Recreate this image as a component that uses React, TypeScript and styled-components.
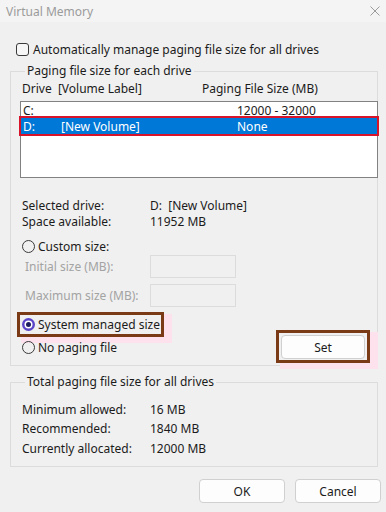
import React from "react";
import styled, { createGlobalStyle } from "styled-components";

const Global = createGlobalStyle`
  html, body { margin: 0; padding: 0; background: #f0f0f0; }
  * { box-sizing: border-box; }
`;

const Window = styled.div`
  width: 386px;
  height: 512px;
  background: #f0f0f0;
  font-family: "Noto Sans", "Open Sans", sans-serif;
  font-size: 12px;
  color: #1b1b1b;
  display: flex;
  flex-direction: column;
  overflow: hidden;
`;

const TitleBar = styled.div`
  height: 22px;
  background: #f4f4f4;
  display: flex;
  align-items: center;
  justify-content: space-between;
  padding: 0 6px 0 6px;
  color: #9b9b9b;
  font-size: 12px;
  flex-shrink: 0;
`;

const Close = styled.svg`
  width: 10px;
  height: 10px;
`;

const Body = styled.div`
  padding: 0 8px 0 10px;
  display: flex;
  flex-direction: column;
`;

const CheckRow = styled.label`
  display: flex;
  align-items: center;
  gap: 4px;
  margin: 20px 0 0 6px;
  height: 14px;
`;

const CheckBox = styled.span`
  width: 13px;
  height: 13px;
  border: 1px solid #3a3a3a;
  border-radius: 3px;
  background: #f7f7f7;
`;

const Group = styled.fieldset<{ $h: number; $top: number }>`
  margin: ${(p) => p.$top}px 0 0 0;
  padding: 0 0 0 9px;
  width: 368px;
  height: ${(p) => p.$h}px;
  border: 1px solid #dcdcdc;
  min-inline-size: 0;
`;

const Legend = styled.legend`
  padding: 0 2px;
  margin-left: 5px;
  line-height: 14px;
`;

const HeaderRow = styled.div`
  display: flex;
  height: 16px;
  align-items: center;
  margin-top: 2px;
  padding-left: 2px;
`;

const HeaderCell = styled.span<{ $w: number }>`
  width: ${(p) => p.$w}px;
`;

const List = styled.div`
  margin-top: 5px;
  width: 358px;
  height: 77px;
  background: #ffffff;
  border: 1px solid #828282;
  display: flex;
  flex-direction: column;
`;

const ListRow = styled.div<{ $sel?: boolean }>`
  display: flex;
  height: 16px;
  align-items: center;
  padding-left: 2px;
  background: ${(p) => (p.$sel ? "#0078d7" : "transparent")};
  color: ${(p) => (p.$sel ? "#ffffff" : "#1b1b1b")};
  outline: ${(p) => (p.$sel ? "2px solid #d8142b" : "none")};
`;

const Cell = styled.span<{ $w?: number }>`
  width: ${(p) => (p.$w ? `${p.$w}px` : "auto")};
  flex-shrink: 0;
`;

const InfoGrid = styled.div<{ $top: number; $row: number }>`
  display: grid;
  grid-template-columns: 128px auto;
  grid-auto-rows: ${(p) => p.$row}px;
  align-items: center;
  margin-top: ${(p) => p.$top}px;
  padding-left: 2px;
  line-height: 16px;
`;

const RadioRow = styled.div<{ $top: number }>`
  display: flex;
  align-items: center;
  gap: 3px;
  height: 16px;
  margin-top: ${(p) => p.$top}px;
  padding-left: 2px;
`;

const Radio = styled.span<{ $on?: boolean }>`
  width: 13px;
  height: 13px;
  border-radius: 50%;
  flex-shrink: 0;
  border: ${(p) => (p.$on ? "none" : "1px solid #3a3a3a")};
  background: ${(p) => (p.$on ? "#5a45c8" : "transparent")};
  display: flex;
  align-items: center;
  justify-content: center;
  &::after {
    content: "";
    display: ${(p) => (p.$on ? "block" : "none")};
    width: 5px;
    height: 5px;
    border-radius: 50%;
    background: #1b1b60;
    box-shadow: 0 0 0 1.5px #ffffff;
  }
`;

const SizeRow = styled.div<{ $top: number }>`
  display: flex;
  align-items: center;
  height: 23px;
  margin-top: ${(p) => p.$top}px;
  padding-left: 5px;
  color: #a3a3a3;
`;

const SizeLabel = styled.span`
  width: 125px;
`;

const SizeInput = styled.span`
  width: 86px;
  height: 23px;
  border: 1px solid #dcdcdc;
`;

const Bottom = styled.div`
  display: flex;
  justify-content: space-between;
  align-items: flex-start;
  margin-top: 5px;
`;

const RadioCol = styled.div`
  display: flex;
  flex-direction: column;
`;

const Mark = styled.div`
  border: 3px solid #7a3a16;
  box-shadow: 6px 4px 0 2px #fde2ee;
`;

const MarkRadio = styled(Mark)`
  margin-left: -3px;
  width: 147px;
  height: 25px;
  display: flex;
  align-items: center;
  gap: 3px;
  padding-left: 2px;
`;

const MarkButton = styled(Mark)`
  margin: 18px 7px 0 0;
  padding: 2px 2px;
  width: 94px;
  height: 33px;
`;

const Button = styled.button<{ $w: number }>`
  width: ${(p) => p.$w}px;
  height: 24px;
  background: #fdfdfd;
  border: 1px solid #d0d0d0;
  border-radius: 4px;
  font-family: inherit;
  font-size: 12px;
  color: #1b1b1b;
  padding: 0;
`;

const Footer = styled.div`
  display: flex;
  justify-content: flex-end;
  gap: 10px;
  margin: 12px -3px 0 0;
`;

export default function App() {
  return (
    <Window>
      <Global />
      <TitleBar>
        <span>Virtual Memory</span>
        <Close viewBox="0 0 10 10">
          <path d="M0.5 0.5 L9.5 9.5 M9.5 0.5 L0.5 9.5" stroke="#9b9b9b" strokeWidth="1" />
        </Close>
      </TitleBar>
      <Body>
        <CheckRow>
          <CheckBox />
          <span>Automatically manage paging file size for all drives</span>
        </CheckRow>
        <Group $h={302} $top={8}>
          <Legend>Paging file size for each drive</Legend>
          <HeaderRow>
            <HeaderCell $w={180}>Drive&nbsp; [Volume Label]</HeaderCell>
            <HeaderCell $w={160}>Paging File Size (MB)</HeaderCell>
          </HeaderRow>
          <List>
            <ListRow>
              <Cell $w={214}>C:</Cell>
              <Cell>12000 - 32000</Cell>
            </ListRow>
            <ListRow $sel>
              <Cell $w={38}>D:</Cell>
              <Cell $w={176}>[New Volume]</Cell>
              <Cell>None</Cell>
            </ListRow>
          </List>
          <InfoGrid $top={20} $row={16}>
            <span>Selected drive:</span>
            <span>D:&nbsp; [New Volume]</span>
            <span>Space available:</span>
            <span>11952 MB</span>
          </InfoGrid>
          <RadioRow $top={8}>
            <Radio />
            <span>Custom size:</span>
          </RadioRow>
          <SizeRow $top={1}>
            <SizeLabel>Initial size (MB):</SizeLabel>
            <SizeInput />
          </SizeRow>
          <SizeRow $top={6}>
            <SizeLabel>Maximum size (MB):</SizeLabel>
            <SizeInput />
          </SizeRow>
          <Bottom>
            <RadioCol>
              <MarkRadio>
                <Radio $on />
                <span>System managed size</span>
              </MarkRadio>
              <RadioRow $top={2}>
                <Radio />
                <span>No paging file</span>
              </RadioRow>
            </RadioCol>
            <MarkButton>
              <Button $w={84}>Set</Button>
            </MarkButton>
          </Bottom>
        </Group>
        <Group $h={92} $top={9}>
          <Legend>Total paging file size for all drives</Legend>
          <InfoGrid $top={11} $row={19.5}>
            <span>Minimum allowed:</span>
            <span>16 MB</span>
            <span>Recommended:</span>
            <span>1840 MB</span>
            <span>Currently allocated:</span>
            <span>12000 MB</span>
          </InfoGrid>
        </Group>
        <Footer>
          <Button $w={86}>OK</Button>
          <Button $w={86}>Cancel</Button>
        </Footer>
      </Body>
    </Window>
  );
}
